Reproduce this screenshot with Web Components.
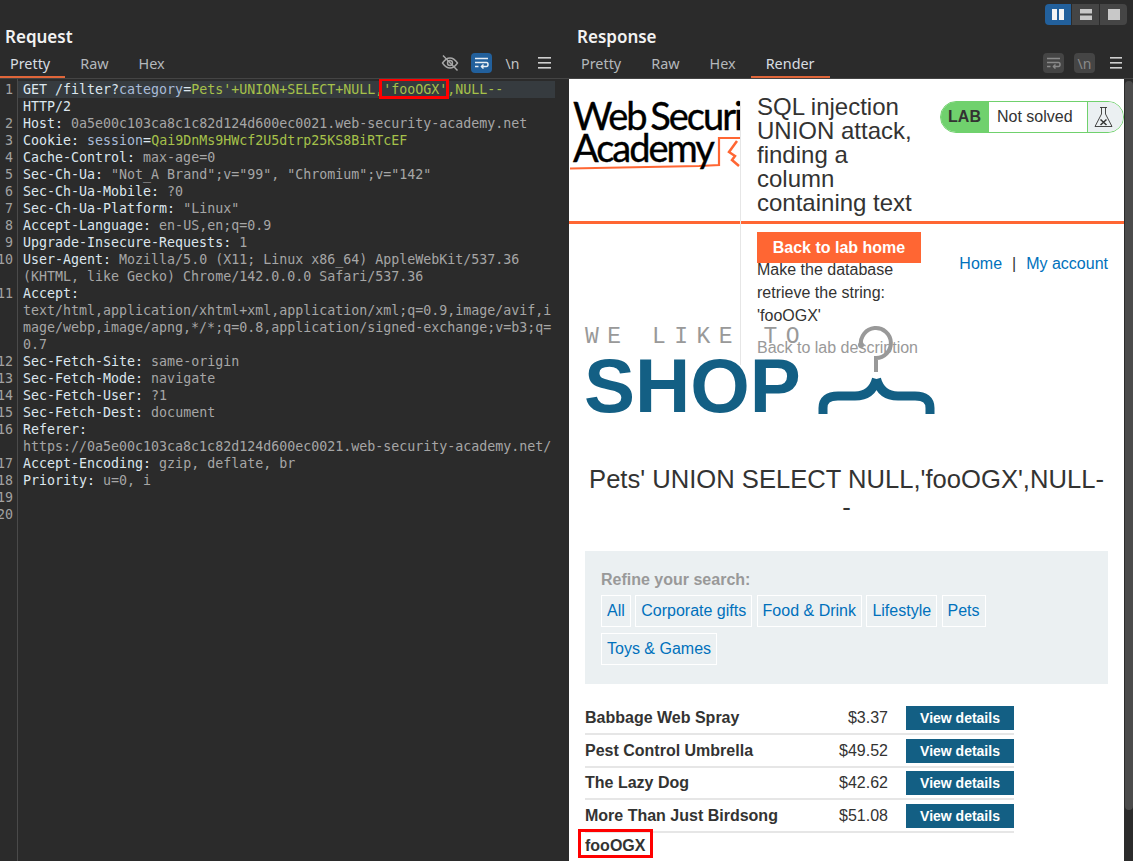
<!DOCTYPE html>
<html>
<head>
<meta charset="utf-8">
<style>
    html, body { margin: 0; height: 100%; background: #2b2b2b; overflow: hidden; }
</style>
</head>
<body>
<burp-app>
    <burp-pane slot="left" title-text="Request" tabs="Pretty,Raw,Hex" active="Pretty" shift="left">
        <burp-tools slot="tools" mode="request"></burp-tools>
        <http-editor></http-editor>
    </burp-pane>
    <burp-pane slot="right" title-text="Response" tabs="Pretty,Raw,Hex,Render" active="Render" shift="right">
        <view-toggle slot="top"></view-toggle>
        <burp-tools slot="tools" mode="response"></burp-tools>
        <render-view>
            <lab-header></lab-header>
            <shop-page></shop-page>
        </render-view>
    </burp-pane>
</burp-app>

<script>
class BurpApp extends HTMLElement {
    constructor() {
        super()
        this.attachShadow({ mode: 'open' })
        this.shadowRoot.innerHTML = /* html */ `
            <style>
            :host { display: grid; grid-template-columns: 566px 567px; height: 861px; font-family: "Noto Sans", sans-serif; color: #d8d8d8; }
            </style>
            <slot name="left"></slot>
            <slot name="right"></slot>
        `
    }
}

class BurpPane extends HTMLElement {
    constructor() {
        super()
        this.attachShadow({ mode: 'open' })
    }

    connectedCallback() {
        const active = this.getAttribute('active')
        const tabs = this.getAttribute('tabs').split(',')
            .map(t => `<span class="tab ${t === active ? 'on' : ''}">${t}</span>`).join('')
        this.shadowRoot.innerHTML = /* html */ `
            <style>
            :host { display: flex; flex-direction: column; height: 861px; min-width: 0; background: #2b2b2b; }
            .top { height: 25px; display: flex; justify-content: flex-end; }
            .title { height: 25px; line-height: 24px; font-size: 17px; font-weight: 600; color: #f2f2f2; padding-left: 5px; }
            :host([shift="right"]) .title { padding-left: 11px; }
            .bar { height: 28px; display: flex; justify-content: space-between; border-bottom: 1px solid #444; }
            .tabs { display: flex; margin-left: -5px; }
            :host([shift="right"]) .tabs { margin-left: 0; }
            .tab { padding: 0 15px; font-size: 14.4px; line-height: 28px; height: 26px; color: #b4b8bc; }
            .tab.on { color: #d8dde2; border-bottom: 2px solid #e0663a; }
            .body { flex: 1; min-height: 0; display: flex; }
            </style>
            <div class="top"><slot name="top"></slot></div>
            <div class="title">${this.getAttribute('title-text')}</div>
            <div class="bar">
                <div class="tabs">${tabs}</div>
                <slot name="tools"></slot>
            </div>
            <div class="body"><slot></slot></div>
        `
    }
}

class ViewToggle extends HTMLElement {
    constructor() {
        super()
        this.attachShadow({ mode: 'open' })
        this.shadowRoot.innerHTML = /* html */ `
            <style>
            :host { display: flex; margin: 4px 6px 0 0; height: 21px; }
            .b { width: 27px; background: #454545; display: flex; align-items: center; justify-content: center; margin-left: 1px; }
            .first { width: 26px; background: #22609c; border-radius: 4px 0 0 4px; margin-left: 0; }
            .end { border-radius: 0 4px 4px 0; }
            svg { display: block; }
            </style>
            <div class="b first"><svg width="12" height="11"><rect width="5" height="11" fill="#f4f4f4"/><rect x="7" width="5" height="11" fill="#f4f4f4"/></svg></div>
            <div class="b"><svg width="12" height="11"><rect width="12" height="4.500" fill="#c8c8c8"/><rect y="6.500" width="12" height="4.500" fill="#c8c8c8"/></svg></div>
            <div class="b end"><svg width="12" height="11"><rect width="12" height="11" fill="#c8c8c8"/></svg></div>
        `
    }
}

const WRAP_ICON = c => `<svg width="15" height="12" viewBox="0 0 15 12" fill="none" stroke="${c}" stroke-width="1.500"><path d="M1 1.500H14"/><path d="M1 5.500H12.500Q14 5.500 14 7.500Q14 9.500 12.500 9.500H7.500"/><path d="M9.500 7.500L7.500 9.500L9.500 11.500"/><path d="M1 9.500H4.500"/></svg>`

class BurpTools extends HTMLElement {
    constructor() {
        super()
        this.attachShadow({ mode: 'open' })
    }

    connectedCallback() {
        const req = this.getAttribute('mode') === 'request'
        const menu = `<svg class="menu" width="${req ? 13 : 12}" height="12"><g fill="#cfcfcf"><rect y="0" width="13" height="1.600"/><rect y="5" width="13" height="1.600"/><rect y="10" width="13" height="1.600"/></g></svg>`
        const eye = `<svg class="eye" width="18" height="18" viewBox="0 0 18 18" fill="none" stroke="#a8a8a8" stroke-width="1.400"><path d="M1.500 9Q5 4 9 4Q13 4 16.500 9Q13 14 9 14Q5 14 1.500 9Z"/><circle cx="9" cy="9" r="2.500"/><path d="M2 1.500L16.500 16.500"/></svg>`
        this.shadowRoot.innerHTML = /* html */ `
            <style>
            :host { display: flex; align-items: center; height: 26px; }
            .btn { width: 21px; height: 20px; border-radius: 4px; display: flex; align-items: center; justify-content: center; font: 14px "Noto Sans", sans-serif; }
            .blue { background: #22609c; }
            .dim { background: #454545; color: #8a8a8a; }
            .plain { color: #c4c4c4; }
            svg { display: block; }
            .eye { margin-right: 12px; }
            .menu { margin-left: 15px; margin-right: ${req ? 15 : 11}px; }
            .nl { margin-left: 10px; }
            </style>
            ${req ? eye : ''}
            <div class="btn ${req ? 'blue' : 'dim'}">${WRAP_ICON(req ? '#e8eef4' : '#8a8a8a')}</div>
            <div class="btn nl ${req ? 'plain' : 'dim'}">\\n</div>
            ${menu}
        `
    }
}

// k = header name, v = plain value, p = param name, g = green value
const REQUEST_LINES = [
    [1, `<i class="k">GET /filter?</i><i class="p">category</i><i class="k">=</i><i class="g">Pets'+UNION+SELECT+NULL,<span class="hit">'fooOGX'</span>,NULL--</i>`, true],
    ['', `<i class="k">HTTP/2</i>`],
    [2, `<i class="k">Host:</i> <i class="v">0a5e00c103ca8c1c82d124d600ec0021.web-security-academy.net</i>`],
    [3, `<i class="k">Cookie:</i> <i class="p">session</i><i class="k">=</i><i class="g">Qai9DnMs9HWcf2U5dtrp25KS8BiRTcEF</i>`],
    [4, `<i class="k">Cache-Control:</i> <i class="v">max-age=0</i>`],
    [5, `<i class="k">Sec-Ch-Ua:</i> <i class="v">"Not_A Brand";v="99", "Chromium";v="142"</i>`],
    [6, `<i class="k">Sec-Ch-Ua-Mobile:</i> <i class="v">?0</i>`],
    [7, `<i class="k">Sec-Ch-Ua-Platform:</i> <i class="v">"Linux"</i>`],
    [8, `<i class="k">Accept-Language:</i> <i class="v">en-US,en;q=0.9</i>`],
    [9, `<i class="k">Upgrade-Insecure-Requests:</i> <i class="v">1</i>`],
    [10, `<i class="k">User-Agent:</i> <i class="v">Mozilla/5.0 (X11; Linux x86_64) AppleWebKit/537.36</i>`],
    ['', `<i class="v">(KHTML, like Gecko) Chrome/142.0.0.0 Safari/537.36</i>`],
    [11, `<i class="k">Accept:</i>`],
    ['', `<i class="v">text/html,application/xhtml+xml,application/xml;q=0.9,image/avif,i</i>`],
    ['', `<i class="v">mage/webp,image/apng,*/*;q=0.8,application/signed-exchange;v=b3;q=</i>`],
    ['', `<i class="v">0.7</i>`],
    [12, `<i class="k">Sec-Fetch-Site:</i> <i class="v">same-origin</i>`],
    [13, `<i class="k">Sec-Fetch-Mode:</i> <i class="v">navigate</i>`],
    [14, `<i class="k">Sec-Fetch-User:</i> <i class="v">?1</i>`],
    [15, `<i class="k">Sec-Fetch-Dest:</i> <i class="v">document</i>`],
    [16, `<i class="k">Referer:</i>`],
    ['', `<i class="v">https://0a5e00c103ca8c1c82d124d600ec0021.web-security-academy.net/</i>`],
    [17, `<i class="k">Accept-Encoding:</i> <i class="v">gzip, deflate, br</i>`],
    [18, `<i class="k">Priority:</i> <i class="v">u=0, i</i>`],
    [19, ''],
    [20, '']
]

class HttpEditor extends HTMLElement {
    constructor() {
        super()
        this.attachShadow({ mode: 'open' })
        const rows = REQUEST_LINES.map(([n, html, cur]) => `
            <div class="row ${cur ? 'cur' : ''}"><div class="num"><span>${n}</span></div><div class="txt">${html}</div></div>
        `).join('')
        this.shadowRoot.innerHTML = /* html */ `
            <style>
            :host { display: block; flex: 1; position: relative; padding-top: 2px; font: 13.3px/17px "DejaVu Sans Mono", monospace; overflow: hidden; }
            :host::before { content: ''; position: absolute; left: 17px; top: 0; bottom: 0; width: 1px; background: #4a4a4a; }
            .row { display: flex; height: 17px; white-space: pre; }
            .num { width: 13px; flex: none; display: flex; justify-content: flex-end; color: #a2a2a2; margin-right: 5px; }
            .txt { flex: none; width: 537px; padding-left: 5px; box-sizing: border-box; }
            .cur .txt { background: #363b3f; }
            i { font-style: normal; }
            .k { color: #dce6ee; }
            .v { color: #a6a6a6; }
            .p { color: #a9bbd8; }
            .g { color: #a6c14a; }
            .hit { position: relative; }
            .hit::after { content: ''; position: absolute; left: -4px; right: -2px; top: -4px; bottom: -2px; border: 3px solid #f00; }
            </style>
            ${rows}
        `
    }
}

class RenderView extends HTMLElement {
    constructor() {
        super()
        this.attachShadow({ mode: 'open' })
        this.shadowRoot.innerHTML = /* html */ `
            <style>
            :host { display: flex; flex: 1; min-height: 0; padding-left: 3px; }
            .page { width: 555px; flex: none; background: #fff; overflow: hidden; font-family: "Liberation Sans", Arial, sans-serif; font-size: 16px; color: #333332; }
            .bar { flex: 1; padding-top: 2px; }
            .thumb { height: 729px; background: #4b4b4b; border-radius: 4px; margin-left: 1px; }
            </style>
            <div class="page"><slot></slot></div>
            <div class="bar"><div class="thumb"></div></div>
        `
    }
}

class LabHeader extends HTMLElement {
    constructor() {
        super()
        this.attachShadow({ mode: 'open' })
        this.shadowRoot.innerHTML = /* html */ `
            <style>
            :host { display: flex; height: 145px; box-sizing: border-box; border-bottom: 3px solid #ff6633; }
            .logo { width: 171px; flex: none; height: 100px; position: relative; overflow: hidden; font-family: "Lato", sans-serif; color: #000; }
            .logo div { position: absolute; left: 4px; font-size: 38px; line-height: 38px; letter-spacing: -2px; word-spacing: -3px; white-space: nowrap; -webkit-text-stroke: 0.4px #000; }
            .logo svg { position: absolute; left: 0; top: 0; }
            .col { flex: none; width: 182px; height: 264px; margin-top: 22px; border-left: 1px solid #e6e6e6; padding-left: 16px; box-sizing: border-box; }
            h2 { margin: -6px 0 0; font-weight: 400; font-size: 24px; line-height: 24px; width: 165px; }
            .back { display: block; margin-top: 17px; width: 164px; height: 31px; line-height: 31px; text-align: center; background: #ff6633; color: #fff; font-weight: 700; }
            p { margin: -5px 0 0; line-height: 23px; width: 165px; position: relative; }
            .desc { display: block; margin-top: 9px; line-height: 23px; color: #999; white-space: nowrap; position: relative; }
            lab-status { margin: 22px 0 0 18px; }
            </style>
            <div class="logo">
                <svg width="171" height="100" fill="none" stroke="#ff6633">
                    <path d="M1 89.500Q80 88 130 87L150 86V59H171" stroke-width="2.200"/>
                    <path d="M168 62L160 73L166 77L163 81L170 87" stroke-width="2.500"/>
                </svg>
                <div style="top:17px">Web Security</div>
                <div style="top:49px">Academy</div>
            </div>
            <div class="col">
                <h2>SQL injection UNION attack, finding a column containing text</h2>
                <span class="back">Back to lab home</span>
                <p>Make the database retrieve the string: 'fooOGX'</p>
                <span class="desc">Back to lab description</span>
            </div>
            <lab-status></lab-status>
        `
    }
}

class LabStatus extends HTMLElement {
    constructor() {
        super()
        this.attachShadow({ mode: 'open' })
        this.shadowRoot.innerHTML = /* html */ `
            <style>
            :host { display: flex; width: 185px; height: 32px; box-sizing: border-box; border: 1px solid #70d16d; border-radius: 16px; overflow: hidden; }
            .lab { width: 48px; background: #70d16d; font-weight: 700; line-height: 30px; text-align: center; box-sizing: border-box; padding-right: 1px; }
            .txt { flex: 1; line-height: 29px; padding-left: 8px; }
            .flask { width: 36px; box-sizing: border-box; padding-right: 4px; background: #ebf0f2; border-left: 1px solid #70d16d; display: flex; align-items: center; justify-content: center; }
            </style>
            <div class="lab">LAB</div>
            <div class="txt">Not solved</div>
            <div class="flask">
                <svg width="19" height="22" viewBox="0 0 19 22" fill="none" stroke="#333332" stroke-width="0.900">
                    <path d="M6 1.500H13M7.500 1.500V8L1 20.500H18L11.500 8V1.500"/>
                    <path d="M6.500 13.500L12.500 19M12.500 13.500L6.500 19" stroke-width="1.500"/>
                </svg>
            </div>
        `
    }
}

class ShopPage extends HTMLElement {
    constructor() {
        super()
        this.attachShadow({ mode: 'open' })
        this.shadowRoot.innerHTML = /* html */ `
            <style>
            :host { display: block; padding: 0 16px; }
            nav { display: flex; justify-content: flex-end; gap: 10px; margin-top: 28px; line-height: 24px; color: #333332; }
            a { color: #0071bc; }
            h1 { margin: 40px 0 0; font-weight: 400; font-size: 25.6px; line-height: 28px; text-align: center; }
            .list { margin-top: 18.800px; width: 429px; }
            .last { font-weight: 700; margin-top: 1px; line-height: 24px; display: inline-block; position: relative; }
            .last::after { content: ''; position: absolute; left: -7px; right: -8px; top: -5px; bottom: 0; border: 3px solid #f00; }
            </style>
            <nav><a>Home</a><span>|</span><a>My account</a></nav>
            <shop-logo></shop-logo>
            <h1>Pets' UNION SELECT NULL,'fooOGX',NULL-<wbr>-</h1>
            <refine-search></refine-search>
            <div class="list">
                <product-row name="Babbage Web Spray" price="$3.37"></product-row>
                <product-row name="Pest Control Umbrella" price="$49.52"></product-row>
                <product-row name="The Lazy Dog" price="$42.62"></product-row>
                <product-row name="More Than Just Birdsong" price="$51.08"></product-row>
            </div>
            <div class="last">fooOGX</div>
        `
    }
}

class ShopLogo extends HTMLElement {
    constructor() {
        super()
        this.attachShadow({ mode: 'open' })
        this.shadowRoot.innerHTML = /* html */ `
            <style>
            :host { display: flex; height: 101px; margin-top: 48px; }
            .words { width: 233px; flex: none; }
            .we { font: 23px/24px "Liberation Mono", monospace; letter-spacing: 8.500px; color: #999; white-space: nowrap; margin-top: 1px; }
            .shop { font: 700 76.500px/70px "Liberation Sans", Arial, sans-serif; color: #135f84; margin: 2px 0 0 -1px; }
            svg { display: block; flex: none; margin-top: -3px; }
            </style>
            <div class="words">
                <div class="we">WE LIKE TO</div>
                <div class="shop">SHOP</div>
            </div>
            <svg width="118" height="96" viewBox="818 321 118 96" fill="none">
                <path d="M861 345A15 15 0 1 1 876 358V372" stroke="#999" stroke-width="4"/>
                <circle cx="861" cy="345" r="3" fill="#999"/>
                <path d="M823 414V408Q823 396 838 396H855Q872 396 876.500 379M930 414V408Q930 396 915 396H898Q881 396 876.500 379" stroke="#135f84" stroke-width="9"/>
            </svg>
        `
    }
}

class RefineSearch extends HTMLElement {
    constructor() {
        super()
        this.attachShadow({ mode: 'open' })
        const chips = ['All', 'Corporate gifts', 'Food &amp; Drink', 'Lifestyle', 'Pets', 'Toys &amp; Games']
            .map(c => `<a>${c}</a>`).join('')
        this.shadowRoot.innerHTML = /* html */ `
            <style>
            :host { display: block; margin-top: 30px; height: 133px; box-sizing: border-box; padding: 17px 16px 16px; background: #ebf0f2; }
            .lbl { font-weight: 700; color: #999; line-height: 24px; }
            .chips { display: flex; flex-wrap: wrap; gap: 6px 4.450px; margin-top: 3px; }
            a { display: block; height: 32px; box-sizing: border-box; line-height: 29px; padding: 0 5px; border: 1px solid #fff; color: #0071bc; }
            </style>
            <div class="lbl">Refine your search:</div>
            <div class="chips">${chips}</div>
        `
    }
}

class ProductRow extends HTMLElement {
    constructor() {
        super()
        this.attachShadow({ mode: 'open' })
    }

    connectedCallback() {
        this.shadowRoot.innerHTML = /* html */ `
            <style>
            :host { display: flex; align-items: center; height: 32.500px; box-sizing: border-box; border-bottom: 2px solid #e6e6e6; }
            b { flex: 1; }
            span { width: 303px; margin-left: -303px; text-align: right; flex: none; }
            a { flex: none; width: 108px; height: 24px; margin-left: 18px; background: #135f84; color: #fff; font-weight: 700; font-size: 14px; line-height: 24px; text-align: center; }
            </style>
            <b>${this.getAttribute('name')}</b>
            <span>${this.getAttribute('price')}</span>
            <a>View details</a>
        `
    }
}

customElements.define('burp-app', BurpApp)
customElements.define('burp-pane', BurpPane)
customElements.define('view-toggle', ViewToggle)
customElements.define('burp-tools', BurpTools)
customElements.define('http-editor', HttpEditor)
customElements.define('render-view', RenderView)
customElements.define('lab-header', LabHeader)
customElements.define('lab-status', LabStatus)
customElements.define('shop-page', ShopPage)
customElements.define('shop-logo', ShopLogo)
customElements.define('refine-search', RefineSearch)
customElements.define('product-row', ProductRow)
</script>
</body>
</html>
